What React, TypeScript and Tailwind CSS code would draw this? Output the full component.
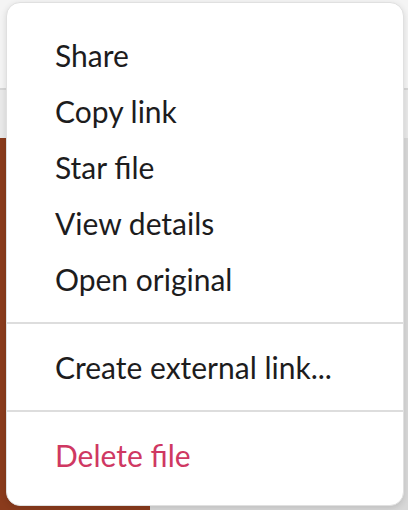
import React from "react";

const items = ["Share", "Copy link", "Star file", "View details", "Open original"];

const MenuItem = ({ label, danger = false }: { label: string; danger?: boolean }) => (
  <div
    className={`flex h-[56px] items-center px-[48px] text-[30px] leading-none ${
      danger ? "text-[#cf3862]" : "text-[#1d1c1d]"
    }`}
  >
    {label}
  </div>
);

export default function App() {
  return (
    <div
      className="relative h-[510px] w-[408px] overflow-hidden bg-[#f8f8f8]"
      style={{ fontFamily: "Lato, 'Noto Sans', sans-serif" }}
    >
      {/* page behind the menu */}
      <div className="h-[88px] bg-[#f4f4f4]" />
      <div className="h-[2px] bg-[#d6d6d6]" />
      <div className="h-[48px] bg-[#e9e9e9]" />
      <div className="flex h-[372px]">
        <div className="w-[150px] bg-[#8a3b1c]" />
        <div className="flex-1 bg-[#d8d8d8]" />
      </div>

      {/* context menu */}
      <div className="absolute left-[6px] top-[2px] flex h-[504px] w-[398px] flex-col rounded-[14px] border border-[#e0e0e0] bg-white pt-[24px] pb-[22px] shadow-[0_2px_6px_rgba(0,0,0,0.12)]">
        {items.map((label) => (
          <MenuItem key={label} label={label} />
        ))}
        <div className="my-[15px] h-[2px] bg-[#dddddd]" />
        <MenuItem label="Create external link..." />
        <div className="my-[15px] h-[2px] bg-[#dddddd]" />
        <MenuItem label="Delete file" danger />
      </div>
    </div>
  );
}
